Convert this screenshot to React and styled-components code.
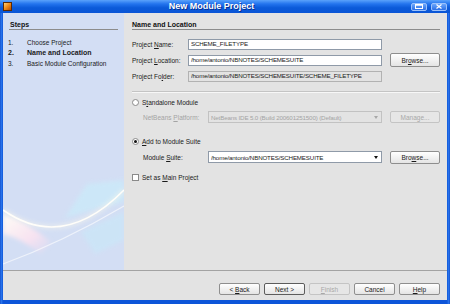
import React from 'react';
import styled, { createGlobalStyle } from 'styled-components';

const GlobalStyle = createGlobalStyle`
  html, body {
    margin: 0;
    padding: 0;
  }
  body {
    width: 450px;
    height: 304px;
    overflow: hidden;
    font-family: 'Liberation Sans', Arial, sans-serif;
  }
`;

const Window = styled.div`
  width: 450px;
  height: 304px;
  display: flex;
  flex-direction: column;
  background: linear-gradient(to right, #0a3fbf 0, #2f7cf0 1px, #0d55d9 3px, #0d55d9 447px, #2f7cf0 449px, #0a3fbf 450px);
`;

const TitleBar = styled.div`
  height: 13px;
  flex-shrink: 0;
  display: flex;
  align-items: center;
  padding: 0 3px;
  background: linear-gradient(#5aa2fb 0%, #2374ee 30%, #0b5ad9 60%, #0a55d6 100%);
`;

const AppIcon = styled.div`
  width: 9px;
  height: 9px;
  box-sizing: border-box;
  border: 1px solid #5a2a06;
  background: linear-gradient(135deg, #ffd27a 0%, #f08a16 50%, #b04a05 100%);
`;

const Title = styled.div`
  flex: 1;
  text-align: center;
  color: #fff;
  font-weight: bold;
  font-size: 9px;
  line-height: 13px;
  text-shadow: 1px 1px 0 #0a2f8f;
`;

const Controls = styled.div`
  display: flex;
  gap: 4px;
`;

const CtrlButton = styled.div`
  width: 16px;
  height: 8px;
  box-sizing: border-box;
  border: 1px solid #9cc2fb;
  border-radius: 2px;
  background: linear-gradient(#6aa6fb, #2b6fe6);
  display: flex;
  align-items: center;
  justify-content: center;
`;

const Frame = styled.div`
  flex: 1;
  margin: 0 3px 4px;
  display: flex;
  flex-direction: column;
  background: #e3e3e3;
  min-height: 0;
`;

const Main = styled.div`
  flex: 1;
  display: flex;
  min-height: 0;
`;

const StepsPanel = styled.div`
  width: 121px;
  flex-shrink: 0;
  box-sizing: border-box;
  padding: 0 6px;
  background: #d3def4;
  display: flex;
  flex-direction: column;
  overflow: hidden;
`;

const Heading = styled.div`
  margin-top: 8px;
  font-weight: bold;
  font-size: 7px;
  line-height: 8px;
  color: #111;
  border-bottom: 1px solid #8c8c8c;
  padding-left: ${p => p.$indent || 0}px;
`;

const StepList = styled.div`
  margin: 7px 0 0 -1px;
  display: grid;
  grid-template-columns: 19px 1fr;
  grid-auto-rows: 10.5px;
  align-items: center;
  font-size: 6.5px;
  color: #1a1a1a;
`;

const StepText = styled.span`
  font-weight: ${p => (p.$current ? 'bold' : 'normal')};
  font-size: ${p => (p.$current ? '7px' : '6.5px')};
`;

const Swoosh = styled.svg`
  display: block;
  flex-shrink: 0;
  margin: auto -6px 0;
  width: 121px;
  height: 100px;
`;

const Content = styled.div`
  flex: 1;
  box-sizing: border-box;
  padding: 0 7px 0 8px;
  display: flex;
  flex-direction: column;
  font-size: 6.5px;
  color: #1a1a1a;
`;

const FieldGrid = styled.div`
  margin-top: 7px;
  display: grid;
  grid-template-columns: 56px 1fr 58px;
  row-gap: 2px;
  grid-auto-rows: 14px;
  align-items: center;
`;

const Label = styled.span`
  white-space: nowrap;
  color: ${p => (p.$disabled ? '#a4a4a4' : '#1a1a1a')};
`;

const TextField = styled.input`
  box-sizing: border-box;
  height: 11px;
  width: 100%;
  margin: 0;
  padding: 0 2px 1px;
  border: 1px solid ${p => (p.readOnly ? '#b2b2b2' : '#8f9aa8')};
  background: ${p => (p.readOnly ? '#e3e3e3' : '#fff')};
  font-family: inherit;
  font-size: 6.2px;
  letter-spacing: -0.15px;
  line-height: 8px;
  color: #1a1a1a;
  outline: none;
`;

const Button = styled.div`
  box-sizing: border-box;
  height: ${p => p.$h || 12}px;
  width: ${p => p.$w || 50}px;
  justify-self: end;
  display: flex;
  align-items: center;
  justify-content: center;
  border: 1px solid ${p => (p.$disabled ? '#c4c4c4' : p.$default ? '#5c5c5c' : '#8e8e8e')};
  border-radius: 2px;
  background: ${p => (p.$disabled ? '#e6e6e6' : 'linear-gradient(#ffffff, #e4e4e4)')};
  color: ${p => (p.$disabled ? '#a8a8a8' : '#1a1a1a')};
  font-size: 6.5px;
  white-space: pre;
`;

const Separator = styled.div`
  margin-top: 8px;
  border-top: 1px solid #c4c4c4;
  border-bottom: 1px solid #f7f7f7;
`;

const Option = styled.div`
  margin-top: ${p => p.$top}px;
  height: 10px;
  display: flex;
  align-items: center;
  gap: 3px;
`;

const Radio = styled.span`
  width: 7px;
  height: 7px;
  box-sizing: border-box;
  border: 1px solid #8a8a8a;
  border-radius: 50%;
  background: #fff;
  display: flex;
  align-items: center;
  justify-content: center;
  &::after {
    content: '';
    width: 3px;
    height: 3px;
    border-radius: 50%;
    background: ${p => (p.$checked ? '#111' : 'transparent')};
  }
`;

const Checkbox = styled.span`
  width: 7px;
  height: 7px;
  box-sizing: border-box;
  border: 1px solid #8a8a8a;
  background: #fff;
`;

const SubRow = styled.div`
  margin-top: ${p => p.$top}px;
  padding-left: 11px;
  height: 14px;
  display: grid;
  grid-template-columns: 65px 1fr 58px;
  align-items: center;
`;

const Combo = styled.div`
  box-sizing: border-box;
  height: 12px;
  display: flex;
  align-items: center;
  padding-left: 2px;
  border: 1px solid ${p => (p.$disabled ? '#c2c2c2' : '#8f9aa8')};
  background: ${p => (p.$disabled ? '#e3e3e3' : '#fff')};
  color: ${p => (p.$disabled ? '#a4a4a4' : '#1a1a1a')};
  font-size: 6.2px;
  letter-spacing: -0.15px;
  overflow: hidden;
  white-space: nowrap;
`;

const ComboText = styled.span`
  flex: 1;
  overflow: hidden;
`;

const Arrow = styled.span`
  width: 10px;
  display: flex;
  justify-content: center;
  &::after {
    content: '';
    border-left: 2.5px solid transparent;
    border-right: 2.5px solid transparent;
    border-top: 3px solid ${p => (p.$disabled ? '#a8a8a8' : '#111')};
  }
`;

const Footer = styled.div`
  box-sizing: border-box;
  height: 30px;
  flex-shrink: 0;
  border-top: 1px solid #a3a3a3;
  display: flex;
  justify-content: flex-end;
  align-items: flex-start;
  gap: 4px;
  padding: 12px 7px 0 0;
`;

const Mn = styled.u`
  text-decoration: underline;
  text-underline-offset: 1px;
`;

const steps = [
  { n: '1.', label: 'Choose Project' },
  { n: '2.', label: 'Name and Location', current: true },
  { n: '3.', label: 'Basic Module Configuration' },
];

const Wave = () => (
  <Swoosh viewBox="0 0 121 100">
    <defs>
      <filter id="soft" x="-20%" y="-20%" width="140%" height="140%">
        <feGaussianBlur stdDeviation="2.2" />
      </filter>
      <filter id="thin" x="-10%" y="-10%" width="120%" height="120%">
        <feGaussianBlur stdDeviation="0.5" />
      </filter>
      <linearGradient id="glow" x1="0" y1="0" x2="1" y2="1">
        <stop offset="0" stopColor="#fffdf6" stopOpacity="1" />
        <stop offset="0.6" stopColor="#fbe3f0" stopOpacity="0.9" />
        <stop offset="1" stopColor="#f3dcf0" stopOpacity="0" />
      </linearGradient>
    </defs>
    <path d="M62,48 L84,14 L121,10 L121,32 L96,38 Z" fill="#c8eefb" opacity="0.6" filter="url(#soft)" />
    <path d="M78,62 L121,42 L121,70 L92,84 Z" fill="#c4ecfa" opacity="0.45" filter="url(#soft)" />
    <path d="M0,44 Q24,52 48,72 L38,84 Q18,68 0,64 Z" fill="url(#glow)" filter="url(#soft)" />
    <path d="M0,40 Q60,82 121,20" fill="none" stroke="#ffffff" strokeWidth="1.6" filter="url(#thin)" />
    <path d="M0,40 Q60,82 121,20" fill="none" stroke="#fffbea" strokeWidth="4" opacity="0.45" filter="url(#soft)" />
    <path d="M0,94 Q60,72 121,36" fill="none" stroke="#ffffff" strokeWidth="1.2" opacity="0.6" filter="url(#thin)" />
  </Swoosh>
);

export default function App() {
  return (
    <>
      <GlobalStyle />
      <Window>
        <TitleBar>
          <AppIcon />
          <Title>New Module Project</Title>
          <Controls>
            <CtrlButton>
              <svg width="8" height="5" viewBox="0 0 8 5">
                <rect x="0.5" y="0.5" width="7" height="4" fill="none" stroke="#fff" strokeWidth="1" />
                <rect x="0.5" y="0.5" width="7" height="1.2" fill="#fff" />
              </svg>
            </CtrlButton>
            <CtrlButton>
              <svg width="6" height="5" viewBox="0 0 6 5">
                <path d="M0.5,0.5 L5.5,4.5 M5.5,0.5 L0.5,4.5" stroke="#fff" strokeWidth="1.2" />
              </svg>
            </CtrlButton>
          </Controls>
        </TitleBar>
        <Frame>
          <Main>
            <StepsPanel>
              <Heading $indent={1}>Steps</Heading>
              <StepList>
                {steps.map(s => (
                  <React.Fragment key={s.n}>
                    <StepText $current={s.current}>{s.n}</StepText>
                    <StepText $current={s.current}>{s.label}</StepText>
                  </React.Fragment>
                ))}
              </StepList>
              <Wave />
            </StepsPanel>
            <Content>
              <Heading>Name and Location</Heading>
              <FieldGrid>
                <Label>Project <Mn>N</Mn>ame:</Label>
                <TextField defaultValue="SCHEME_FILETYPE" />
                <span />
                <Label>Project <Mn>L</Mn>ocation:</Label>
                <TextField defaultValue="/home/antonio/NBNOTES/SCHEMESUITE" />
                <Button $h={14}>Br<Mn>o</Mn>wse...</Button>
                <Label>Project Fo<Mn>l</Mn>der:</Label>
                <TextField readOnly defaultValue="/home/antonio/NBNOTES/SCHEMESUITE/SCHEME_FILETYPE" />
                <span />
              </FieldGrid>
              <Separator />
              <Option $top={4}>
                <Radio />
                <span>S<Mn>t</Mn>andalone Module</span>
              </Option>
              <SubRow $top={3}>
                <Label $disabled>NetBeans <Mn>P</Mn>latform:</Label>
                <Combo $disabled>
                  <ComboText>NetBeans IDE 5.0 (Build 200601251500) (Default)</ComboText>
                  <Arrow $disabled />
                </Combo>
                <Button $disabled>Manage...</Button>
              </SubRow>
              <Option $top={12}>
                <Radio $checked />
                <span><Mn>A</Mn>dd to Module Suite</span>
              </Option>
              <SubRow $top={4}>
                <Label>Module <Mn>S</Mn>uite:</Label>
                <Combo>
                  <ComboText>/home/antonio/NBNOTES/SCHEMESUITE</ComboText>
                  <Arrow />
                </Combo>
                <Button $h={13}>Bro<Mn>w</Mn>se...</Button>
              </SubRow>
              <Option $top={8}>
                <Checkbox />
                <span>Set as <Mn>M</Mn>ain Project</span>
              </Option>
            </Content>
          </Main>
          <Footer>
            <Button $w={41}>{'< '}<Mn>B</Mn>ack</Button>
            <Button $w={41} $default>{'Next >'}</Button>
            <Button $w={41} $disabled><Mn>F</Mn>inish</Button>
            <Button $w={41}>Cancel</Button>
            <Button $w={41}><Mn>H</Mn>elp</Button>
          </Footer>
        </Frame>
      </Window>
    </>
  );
}
